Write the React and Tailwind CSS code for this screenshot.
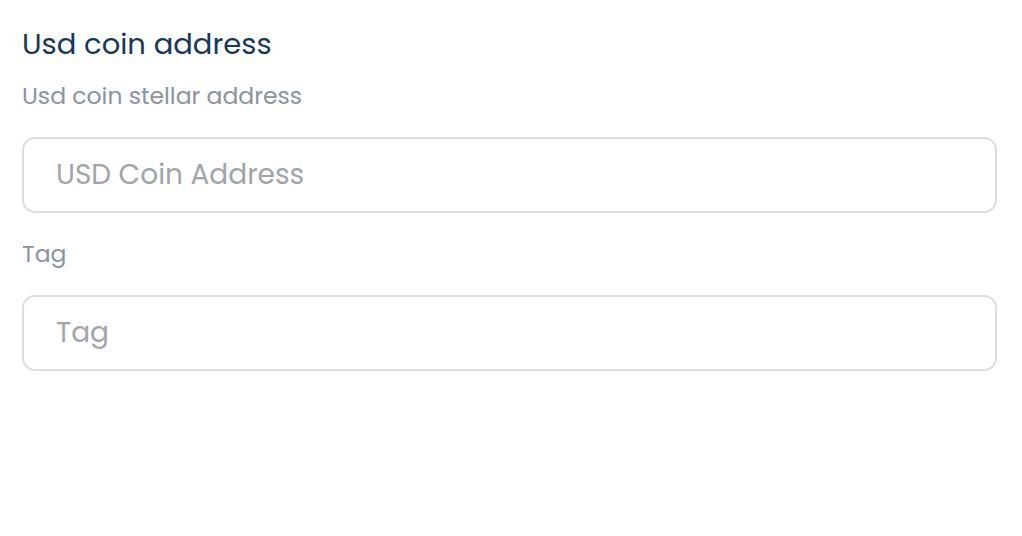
export default function App() {
  const font = { fontFamily: 'Poppins, Inter, "Noto Sans", sans-serif' };
  return (
    <div className="min-h-screen bg-white pl-[22px] pr-[25px] pt-[24px]" style={font}>
      <h1 className="text-[29px] leading-[40px] text-[#17375e] font-normal">Usd coin address</h1>
      <div className="mt-[16px] text-[23.5px] leading-[32px] text-[#8a94a2]">Usd coin stellar address</div>
      <input
        className="mt-[25px] block w-full h-[76px] rounded-[13px] border-2 border-[#dedee2] px-[32px] text-[28px] text-[#333] placeholder:text-[#a1a5aa] outline-none"
        placeholder="USD Coin Address"
      />
      <div className="mt-[25px] text-[23.5px] leading-[32px] text-[#8a94a2]">Tag</div>
      <input
        className="mt-[25px] block w-full h-[76px] rounded-[13px] border-2 border-[#dedee2] px-[32px] text-[28px] text-[#333] placeholder:text-[#a1a5aa] outline-none"
        placeholder="Tag"
      />
    </div>
  );
}
